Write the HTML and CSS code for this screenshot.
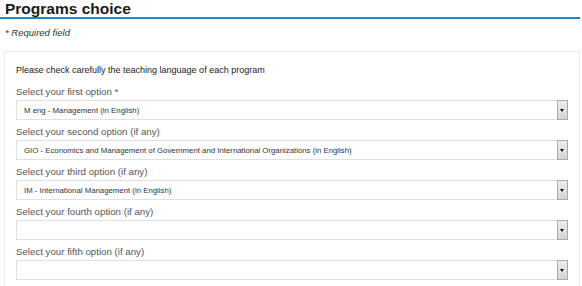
FILE: index.html
```html
<!DOCTYPE html>
<html>
<head>
    <meta charset="utf-8"/>
    <title>Programs choice</title>
    <link rel="stylesheet" href="styles.css">
</head>
<body>
<div class="wrap">
    <div class="head">
        <h2>Programs choice</h2>
    </div>
    <p class="req">* Required field</p>
    <div class="panel">
        <p class="note">Please check carefully the teaching language of each program</p>
        <div class="field">
            <label for="opt1">Select your first option *</label>
            <div class="combo">
                <select id="opt1"><option>M eng - Management (in English)</option></select>
                <span class="btn"></span>
            </div>
        </div>
        <div class="field">
            <label for="opt2">Select your second option (if any)</label>
            <div class="combo">
                <select id="opt2"><option>GIO - Economics and Management of Government and International Organizations (in English)</option></select>
                <span class="btn"></span>
            </div>
        </div>
        <div class="field">
            <label for="opt3">Select your third option (if any)</label>
            <div class="combo">
                <select id="opt3"><option>IM - International Management (in English)</option></select>
                <span class="btn"></span>
            </div>
        </div>
        <div class="field">
            <label for="opt4">Select your fourth option (if any)</label>
            <div class="combo">
                <select id="opt4"><option></option></select>
                <span class="btn"></span>
            </div>
        </div>
        <div class="field">
            <label for="opt5">Select your fifth option (if any)</label>
            <div class="combo">
                <select id="opt5"><option></option></select>
                <span class="btn"></span>
            </div>
        </div>
    </div>
</div>
</body>
</html>
```

FILE: styles.css
```css
* {
    margin: 0;
    padding: 0;
    box-sizing: border-box;
}
body {
    font: 11px/1.3 "Liberation Sans", Arial, Helvetica, sans-serif;
    color: #222;
    background: #fff;
}
.wrap {
    width: 580px;
}
.head {
    height: 19px;
    border-bottom: 2px solid #1b87d5;
}
.head h2 {
    padding: 1px 0 0 5px;
    font-size: 15.5px;
    line-height: 16px;
    font-weight: bold;
    color: #1a1a1a;
}
.req {
    margin: 8px 0 0 5px;
    font-size: 9.5px;
    line-height: 12px;
    font-style: italic;
    color: #333;
}
.panel {
    margin: 12px 0 0 4px;
    padding: 11px 11px 10px;
    border: 1px solid #ebebeb;
    border-bottom: 0;
}
.note {
    font-size: 9px;
    line-height: 14px;
    color: #222;
    margin-bottom: 8px;
}
.field {
    margin-bottom: 5px;
}
.field label {
    display: block;
    font-size: 9.7px;
    line-height: 13px;
    color: #555;
    margin-bottom: 2px;
}
.combo {
    display: flex;
    height: 20px;
    border: 1px solid #e0e0e0;
    border-right: 0;
    background: #fff;
}
.combo select {
    flex: 1;
    min-width: 0;
    -webkit-appearance: none;
    appearance: none;
    border: 0;
    background: transparent;
    padding: 0 0 0 7px;
    font: 7.8px "Liberation Sans", Arial, sans-serif;
    color: #333;
    outline: none;
}
.btn {
    position: relative;
    width: 11px;
    height: 20px;
    margin-top: -1px;
    border: 1px solid #aaa;
    background: linear-gradient(#ececec, #d6d6d6);
}
.btn:after {
    content: "";
    position: absolute;
    left: 2px;
    top: 8px;
    border-left: 2.5px solid transparent;
    border-right: 2.5px solid transparent;
    border-top: 3px solid #111;
}
```
